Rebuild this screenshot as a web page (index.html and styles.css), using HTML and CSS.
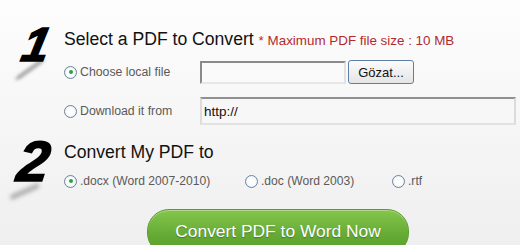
FILE: index.html
```html
<!DOCTYPE html>
<html lang="en">
<head>
  <meta charset="UTF-8" />
  <title>PDF to Word</title>
  <link rel="stylesheet" href="styles.css">
</head>
<body>
  <main class="converter">
    <section class="step step-one">
      <div class="num num-one">1</div>
      <div class="content">
        <h2 class="title">Select a PDF to Convert <span class="note">* Maximum PDF file size : 10 MB</span></h2>
        <div class="row">
          <label class="choice choice-wide"><input type="radio" name="src" checked><span>Choose local file</span></label>
          <span class="file-box"></span>
          <button type="button" class="browse">Gözat...</button>
        </div>
        <div class="row row-url">
          <label class="choice choice-wide"><input type="radio" name="src"><span>Download it from</span></label>
          <input type="text" class="url" value="http://">
        </div>
      </div>
    </section>

    <section class="step step-two">
      <div class="num num-two">2</div>
      <div class="content">
        <h2 class="title">Convert My PDF to</h2>
        <div class="formats">
          <label class="choice"><input type="radio" name="fmt" checked><span>.docx (Word 2007-2010)</span></label>
          <label class="choice"><input type="radio" name="fmt"><span>.doc (Word 2003)</span></label>
          <label class="choice"><input type="radio" name="fmt"><span>.rtf</span></label>
        </div>
      </div>
    </section>

    <div class="actions">
      <button type="button" class="convert">Convert PDF to Word Now</button>
    </div>
  </main>
</body>
</html>
```

FILE: styles.css
```css
html, body {
  height: 100%;
}
body {
  margin: 0;
  overflow: hidden;
  background: linear-gradient(#fdfdfd, #efefef);
  font-family: 'Liberation Sans', Arial, sans-serif;
  color: #111;
}
.converter {
  padding-top: 28px;
}
.step {
  display: flex;
}
.num {
  position: relative;
  box-sizing: border-box;
  width: 64px;
  flex-shrink: 0;
  font-weight: bold;
  font-style: italic;
  color: #000;
  line-height: 1;
  -webkit-text-stroke: 1.5px #000;
}
.num-one {
  font-size: 48px;
  padding-left: 17px;
  margin-top: -7px;
  transform: skewX(-12deg);
}
.num-two {
  font-size: 57px;
  padding-left: 18px;
  margin-top: -8px;
  transform: skewX(-8deg);
}
.num::after {
  content: '';
  position: absolute;
  height: 5px;
  background: rgba(0, 0, 0, 0.3);
  filter: blur(2px);
  border-radius: 3px;
}
.num-one::after {
  left: 14px;
  top: 46px;
  width: 30px;
  transform: rotate(-40deg);
}
.num-two::after {
  left: 14px;
  top: 56px;
  width: 30px;
  transform: rotate(-25deg);
}
.content {
  flex: 1;
}
.title {
  margin: 0;
  font-size: 17.6px;
  font-weight: normal;
  line-height: 22px;
}
.note {
  font-size: 13.4px;
  color: #b22a30;
}
.row {
  display: flex;
  align-items: center;
  margin-top: 8px;
}
.row-url {
  margin-top: 13px;
}
.choice {
  display: inline-flex;
  align-items: center;
  font-size: 12.3px;
  color: #5a5a5a;
}
.choice-wide {
  width: 136px;
}
.choice input {
  appearance: none;
  margin: 0 3px 0 0;
  width: 13px;
  height: 13px;
  border: 1px solid #6a84a0;
  border-radius: 50%;
  background: radial-gradient(circle, #ffffff 40%, #dfe6ee 100%);
  display: grid;
  place-items: center;
}
.choice input:checked::before {
  content: '';
  width: 4px;
  height: 4px;
  border-radius: 50%;
  background: #27a43a;
}
.file-box {
  width: 142px;
  height: 19px;
  background: #fafafa;
  border: 2px solid #8a8a8a;
  border-right-color: #e2e2e2;
  border-bottom-color: #e6e6e6;
}
.browse {
  margin-left: 2px;
  width: 66px;
  height: 24px;
  font-family: 'Liberation Sans', Arial, sans-serif;
  font-size: 13px;
  color: #111;
  border: 1px solid #5d7fa6;
  border-radius: 3px;
  background: linear-gradient(#fbfbfb, #e5e5e5);
  padding: 0;
}
.url {
  box-sizing: border-box;
  width: 316px;
  height: 28px;
  padding: 0 2px;
  font-family: 'Liberation Sans', Arial, sans-serif;
  font-size: 13.5px;
  color: #111;
  background: #f7f7f7;
  border: 2px solid #909090;
  border-right-color: #dcdcdc;
  border-bottom-color: #e2e2e2;
  border-left-color: #dcdcdc;
  outline: none;
}
.step-two {
  margin-top: 16px;
}
.formats {
  display: grid;
  grid-template-columns: 181px 147px auto;
  margin-top: 11px;
}
.formats .choice {
  font-size: 12.1px;
}
.actions {
  margin-top: 19px;
  padding-left: 147px;
}
.convert {
  width: 262px;
  height: 46px;
  font-family: 'Liberation Sans', Arial, sans-serif;
  font-size: 17.4px;
  color: #fff;
  text-shadow: 0 1px 1px rgba(0, 0, 0, 0.3);
  border: 1px solid #5b9a2d;
  border-radius: 22px;
  background: linear-gradient(#84c64c, #64a934 60%, #5a9e2a);
  box-shadow: inset 0 1px 0 rgba(255, 255, 255, 0.35);
  padding: 0 0 2px;
}
```
